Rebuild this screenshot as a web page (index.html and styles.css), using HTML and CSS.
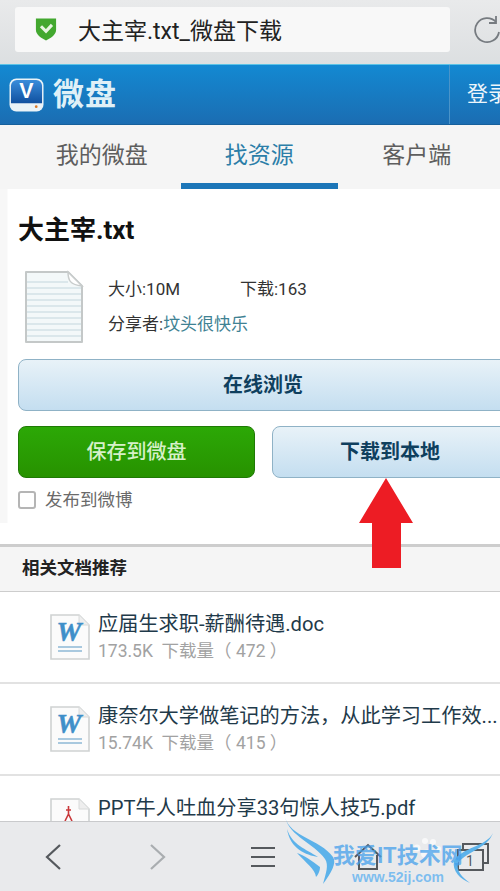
FILE: index.html
```html
<!DOCTYPE html>
<html lang="zh-CN">
<head>
  <meta charset="UTF-8" />
  <meta name="viewport" content="width=device-width, initial-scale=1.0"/>
  <title>大主宰.txt_微盘下载</title>
  <link rel="stylesheet" href="styles.css">
</head>
<body>

  <div class="phone">
    <!-- browser address bar -->
    <div class="addressbar">
      <div class="urlbox">
        <svg class="shield" width="22" height="26" viewBox="0 0 24 26">
          <path d="M1 1.5 H23 V14 C23 19 17 23 12 25.5 C7 23 1 19 1 14 Z" fill="#43a82f"/>
          <path d="M6.5 10 L12 15.5 L18.5 8.5" fill="none" stroke="#e8f5e2" stroke-width="3.4"/>
        </svg>
        <span class="urltitle">大主宰.txt_微盘下载</span>
      </div>
      <svg class="reload" width="26" height="30" viewBox="0 0 26 30">
        <path d="M22 7 A12 12 0 1 0 25 17" fill="none" stroke="#767b80" stroke-width="1.8"/>
        <path d="M22 1 V8 H15" fill="none" stroke="#767b80" stroke-width="1.8"/>
      </svg>
    </div>

    <!-- site header -->
    <div class="siteheader">
      <div class="logo">
        <svg width="35" height="34" viewBox="0 0 36 35">
          <defs>
            <linearGradient id="logoblue" x1="0" y1="0" x2="0" y2="1">
              <stop offset="0" stop-color="#3a8ddb"/>
              <stop offset="1" stop-color="#10509f"/>
            </linearGradient>
          </defs>
          <rect x="0.5" y="0.5" width="35" height="34" rx="7" fill="#eaf3f8"/>
          <path d="M2 8 A6 6 0 0 1 8 2 H28 A6 6 0 0 1 34 8 V26 H2 Z" fill="url(#logoblue)"/>
          <text x="18" y="21" class="logov" text-anchor="middle">V</text>
          <circle cx="28" cy="29.5" r="1.4" fill="#d9792a"/>
        </svg>
        <span class="logotext">微盘</span>
      </div>
      <div class="login">登录</div>
    </div>

    <!-- tabs -->
    <div class="tabs">
      <div class="tab">我的微盘</div>
      <div class="tab active">找资源</div>
      <div class="tab">客户端</div>
    </div>

    <div class="main">
      <div class="filecard">
        <h1>大主宰.txt</h1>
        <div class="fileinfo">
          <svg class="txticon" width="60" height="74" viewBox="0 0 60 74">
            <path d="M2 2 H44 L58 16 V72 H2 Z" fill="#f3f8f9" stroke="#c4c8c8" stroke-width="2" stroke-linejoin="round"/>
            <g stroke="#d3e1e6" stroke-width="1.4">
              <path d="M3 12 H44 M3 18 H57 M3 24 H57 M3 30 H57 M3 36 H57 M3 42 H57 M3 48 H57 M3 54 H57 M3 60 H57 M3 66 H57"/>
            </g>
            <path d="M44 2 C44 10 46 15 58 16 Z" fill="#fff" stroke="#c8cccc" stroke-width="1.5"/>
          </svg>
          <div class="meta">
            <div class="metarow">
              <span class="metasize">大小:10M</span><span>下载:163</span>
            </div>
            <div class="metarow">分享者:<span class="sharer">坟头很快乐</span></div>
          </div>
        </div>
        <div class="btn btn-blue btn-wide">在线浏览</div>
        <div class="btnrow">
          <div class="btn btn-green">保存到微盘</div>
          <div class="btn btn-blue">下载到本地</div>
        </div>
        <label class="weibo"><span class="checkbox"></span>发布到微博</label>
      </div>

      <div class="sectionhead">相关文档推荐</div>

      <div class="doc">
        <svg class="docicon" width="40" height="46" viewBox="0 0 40 46">
          <path d="M1 1 H29 L39 11 V45 H1 Z" fill="#fbfbfb" stroke="#cfd2d2" stroke-width="1.6"/>
          <path d="M29 1 V11 H39" fill="#eee" stroke="#d8dada"/>
          <text x="19" y="27" class="wordw" text-anchor="middle">W</text>
          <path d="M8 33 H32 M8 37 H32" stroke="#8fb9d6" stroke-width="1.5"/>
        </svg>
        <div class="docbody">
          <div class="doctitle">应届生求职-薪酬待遇.doc</div>
          <div class="docsub">173.5K&nbsp;&nbsp;下载量（ 472 ）</div>
        </div>
      </div>
      <div class="doc">
        <svg class="docicon" width="40" height="46" viewBox="0 0 40 46">
          <path d="M1 1 H29 L39 11 V45 H1 Z" fill="#fbfbfb" stroke="#cfd2d2" stroke-width="1.6"/>
          <path d="M29 1 V11 H39" fill="#eee" stroke="#d8dada"/>
          <text x="19" y="27" class="wordw" text-anchor="middle">W</text>
          <path d="M8 33 H32 M8 37 H32" stroke="#8fb9d6" stroke-width="1.5"/>
        </svg>
        <div class="docbody">
          <div class="doctitle">康奈尔大学做笔记的方法，从此学习工作效...</div>
          <div class="docsub">15.74K&nbsp;&nbsp;下载量（ 415 ）</div>
        </div>
      </div>
      <div class="doc">
        <svg class="docicon" width="40" height="46" viewBox="0 0 40 46">
          <path d="M1 1 H29 L39 11 V45 H1 Z" fill="#fbfbfb" stroke="#cfd2d2" stroke-width="1.6"/>
          <path d="M29 1 V11 H39" fill="#eee" stroke="#d8dada"/>
          <path d="M18.5 8 V18 M16 12 H21 M18.5 16 L15 23 M18.5 16 L22 23" fill="none" stroke="#c9383a" stroke-width="1.6"/>
        </svg>
        <div class="docbody">
          <div class="doctitle">PPT牛人吐血分享33句惊人技巧.pdf</div>
        </div>
      </div>
    </div>

    <!-- browser toolbar -->
    <div class="toolbar">
      <svg width="18" height="28" viewBox="0 0 18 28"><path d="M16 2 L3 14 L16 26" fill="none" stroke="#55595d" stroke-width="2.2"/></svg>
      <svg width="18" height="28" viewBox="0 0 18 28"><path d="M2 2 L15 14 L2 26" fill="none" stroke="#a9adb0" stroke-width="2.2"/></svg>
      <svg width="26" height="22" viewBox="0 0 26 22"><path d="M1 2 H25 M1 11 H25 M1 20 H25" stroke="#55595d" stroke-width="2.2"/></svg>
      <svg width="28" height="28" viewBox="0 0 28 28"><path d="M1 14 L14 2 L27 14 M5 12 V26 H23 V12" fill="none" stroke="#55595d" stroke-width="2"/></svg>
      <svg width="32" height="28" viewBox="0 0 32 28">
        <path d="M6 6 V1 H31 V20 H26" fill="none" stroke="#55595d" stroke-width="2"/>
        <rect x="1" y="7" width="25" height="20" fill="none" stroke="#55595d" stroke-width="2"/>
        <text x="13" y="23" class="tabcount" text-anchor="middle">1</text>
      </svg>
    </div>

    <!-- annotation arrow drawn on the screenshot -->
    <svg class="arrow" width="56" height="92" viewBox="0 0 56 92">
      <path d="M28 0 L55 45 H43 V90 H14 V45 H1 Z" fill="#ed1c24"/>
    </svg>

    <!-- site watermark -->
    <div class="watermark">
      <svg class="wings" width="218" height="76" viewBox="0 0 218 76">
        <g fill="#5cb2ea">
          <path d="M3 2 C8 22 38 24 51 42 C55 48 49 58 41 69 C44 58 47 50 43 44 C32 28 8 22 3 2 Z"/>
          <path d="M5 14 C10 30 24 34 36 42 C24 40 8 34 5 14 Z"/>
          <path d="M15 38 C22 40 30 46 38 52 C38 58 34 62 34 62 C33 54 24 48 15 38 Z"/>
          <path d="M211 18 C205 34 185 36 176 48 C174 56 180 62 188 68 C178 64 170 56 172 46 C180 32 204 32 211 18 Z"/>
        </g>
        <g fill="#fff" opacity="0.7">
          <circle cx="135" cy="33" r="3.5"/>
          <circle cx="143" cy="26" r="3"/>
          <circle cx="151" cy="27" r="3"/>
          <circle cx="156" cy="34" r="3"/>
          <ellipse cx="145" cy="39" rx="6" ry="4.5"/>
        </g>
      </svg>
      <div class="wmtext">我爱IT技术网</div>
      <div class="wmurl">www.52ij.com</div>
    </div>
  </div>

</body>
</html>
```

FILE: styles.css
```css
* {
  margin: 0; padding: 0; box-sizing: border-box;
}
body {
  font-family: Roboto, "Noto Sans CJK SC", sans-serif;
  background: #fff;
  color: #222;
}
.phone {
  position: relative;
  width: 500px;
  height: 891px;
  overflow: hidden;
  display: flex;
  flex-direction: column;
}

/* address bar */
.addressbar {
  height: 64px;
  flex: none;
  display: flex;
  align-items: flex-start;
  padding: 7px 0 0 15px;
  background: linear-gradient(#e9eaeb, #dcdfe1);
}
.urlbox {
  width: 436px;
  height: 45px;
  background: #f8f8f8;
  border-radius: 3px;
  display: flex;
  align-items: center;
  padding: 0 0 2px 20px;
}
.urltitle {
  margin-left: 21px;
  font-size: 23px;
  color: #222;
  white-space: nowrap;
}
.reload {
  margin: 8px 0 0 24px;
  flex: none;
}

/* header */
.siteheader {
  height: 61px;
  flex: none;
  display: flex;
  align-items: center;
  justify-content: space-between;
  background: linear-gradient(#1389d2, #1b6db2);
  border-top: 1px solid #5cc3e6;
  border-bottom: 1px solid #16609c;
}
.logo {
  display: flex;
  align-items: center;
  margin-left: 9px;
}
.logov {
  font-family: "Liberation Sans", sans-serif;
  font-size: 22px;
  font-weight: bold;
  fill: #fff;
}
.logotext {
  margin-left: 9px;
  font-size: 31px;
  font-weight: bold;
  color: #dff0f7;
  letter-spacing: 1px;
  line-height: 35px;
}
.login {
  width: 51px;
  height: 100%;
  border-left: 1px solid #4a94c9;
  padding-left: 17px;
  font-size: 21px;
  line-height: 59px;
  color: #eef6fb;
  white-space: nowrap;
}

/* tabs */
.tabs {
  height: 64px;
  flex: none;
  display: flex;
  padding-left: 23px;
  background: #f5f5f5;
}
.tab {
  width: 157.5px;
  text-align: center;
  font-size: 23px;
  line-height: 62px;
  color: #5e5e5e;
}
.tab.active {
  color: #2c7ea8;
  border-bottom: 6px solid #1c76b8;
}

/* main */
.main {
  flex: 1;
  min-height: 0;
  overflow: hidden;
  background: #fff;
}
.filecard {
  height: 355px;
  padding: 21px 0 0 18px;
  width: 500px;
  background: linear-gradient(90deg, #f7f7f7 7px, #fff 8px) no-repeat;
  background-size: 8px 334px;
}
.filecard h1 {
  font-size: 26px;
  line-height: 40px;
  color: #111;
  white-space: nowrap;
}
.fileinfo {
  display: flex;
  margin: 20px 0 0 6px;
  height: 74px;
}
.txticon {
  flex: none;
}
.meta {
  margin: 0 0 0 24px;
  padding-top: 1px;
  font-size: 17px;
  color: #333;
}
.metarow {
  height: 35px;
  line-height: 36px;
  white-space: nowrap;
}
.metasize {
  display: inline-block;
  width: 132px;
}
.sharer {
  color: #3f8293;
}
.btn {
  height: 52px;
  border-radius: 8px;
  text-align: center;
  font-size: 20px;
  font-weight: bold;
  line-height: 50px;
}
.btn-blue {
  border: 1px solid #8fb2c6;
  background: linear-gradient(#e8f2f8, #c4def0);
  color: #0f3f5e;
}
.btn-green {
  border: 1px solid #1f7a05;
  background: linear-gradient(#2ca806, #279200);
  color: #d6f0c8;
  font-weight: 500;
}
.btn-wide {
  width: 490px;
  margin-top: 15px;
}
.btnrow {
  display: flex;
  gap: 17px;
  margin-top: 15px;
  width: 490px;
}
.btnrow .btn-green {
  width: 237px;
  flex: none;
}
.btnrow .btn-blue {
  flex: 1;
}
.weibo {
  display: flex;
  align-items: center;
  margin-top: 11px;
  font-size: 17.5px;
  line-height: 22px;
  color: #6a6a6a;
}
.checkbox {
  width: 18px;
  height: 18px;
  margin-right: 9px;
  border: 2px solid #b5b5b5;
  border-radius: 3px;
  background: #fff;
}
.sectionhead {
  height: 48px;
  border-top: 3px solid #cdcdcd;
  border-bottom: 1px solid #cdcdcd;
  background: #f5f5f5;
  padding-left: 22px;
  font-size: 17.5px;
  font-weight: bold;
  line-height: 43px;
  color: #222;
}
.doc {
  height: 92px;
  display: flex;
  padding: 22px 0 0 50px;
  border-bottom: 2px solid #e2e2e2;
}
.docicon {
  flex: none;
}
.wordw {
  font-family: "Liberation Serif", serif;
  font-size: 28px;
  font-weight: bold;
  font-style: italic;
  fill: #3f8fc9;
  stroke: #3f8fc9;
  stroke-width: 0.5;
}
.docbody {
  margin: -5px 0 0 8px;
  white-space: nowrap;
}
.doctitle {
  font-size: 20.2px;
  line-height: 30px;
  color: #1f3a4a;
}
.docsub {
  font-size: 17.5px;
  line-height: 24px;
  color: #a2a2a2;
}

/* toolbar */
.toolbar {
  height: 70px;
  flex: none;
  display: grid;
  grid-template-columns: repeat(5, 105px);
  justify-items: center;
  align-items: center;
  background: #e9eaec;
  border-top: 1px solid #c9cacc;
}
.tabcount {
  font-size: 14px;
  fill: #55595d;
}

/* overlays on the screenshot */
.arrow {
  position: absolute;
  left: 358px;
  top: 478px;
}
.watermark {
  position: absolute;
  left: 282px;
  top: 815px;
  width: 218px;
  height: 76px;
}
.wings {
  position: absolute;
  left: 0;
  top: 0;
}
.wmtext {
  position: absolute;
  left: 51px;
  top: 26px;
  font-size: 22px;
  font-weight: bold;
  line-height: 30px;
  color: rgba(70, 160, 235, 0.75);
  white-space: nowrap;
}
.wmurl {
  position: absolute;
  left: 70px;
  top: 54px;
  font-family: "Liberation Sans", sans-serif;
  font-size: 14px;
  font-weight: bold;
  line-height: 16px;
  color: rgba(90, 175, 240, 0.75);
  white-space: nowrap;
}
```
